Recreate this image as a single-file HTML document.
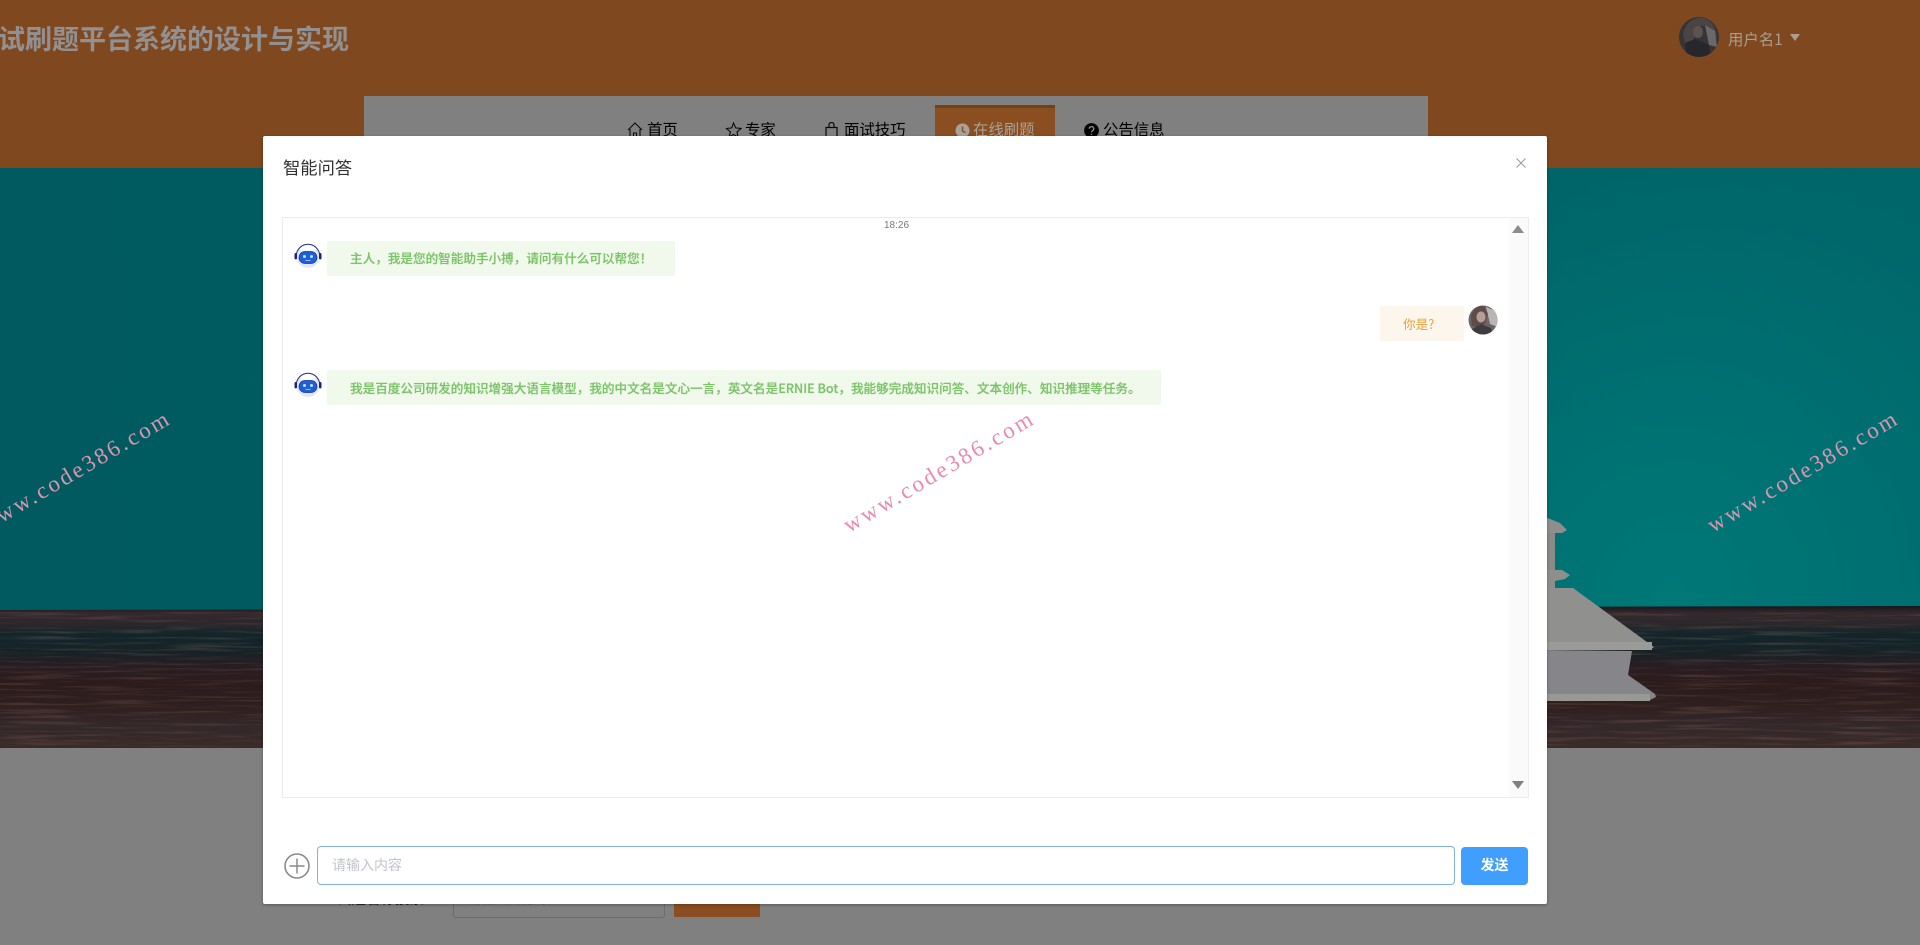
<!DOCTYPE html>
<html lang="zh"><head><meta charset="utf-8"><title>智能问答</title>
<style>
html,body{margin:0;padding:0;width:1920px;height:945px;overflow:hidden;background:#808080}
body{position:relative;font-family:"Liberation Sans","Noto Sans CJK SC",sans-serif}
div,span,svg{position:absolute}
.t{white-space:nowrap}
.cjk{font-family:"Noto Sans CJK SC","Liberation Sans",sans-serif}
.nav{top:120px;height:22px;line-height:22px;font-size:15.4px;color:#000}
.b{height:35px;line-height:35px;border-radius:2px;font-size:12.6px;white-space:nowrap}
.g{background:#f0f9eb;color:#7cc36a;left:327px;padding-left:23px;box-sizing:border-box;font-weight:500;text-shadow:0 0 .5px #7cc36a}
</style></head><body>

<!-- hero -->
<svg style="left:0;top:168px" width="1920" height="580" viewBox="0 168 1920 580">
<defs>
<linearGradient id="teal" x1="0" x2="1" y1="0" y2="0">
<stop offset="0" stop-color="#005a5f"/><stop offset=".78" stop-color="#006266"/><stop offset="1" stop-color="#00666a"/></linearGradient>
<radialGradient id="glow" gradientUnits="userSpaceOnUse" cx="0" cy="0" r="1" gradientTransform="translate(1670 600) scale(440 470)">
<stop offset="0" stop-color="#007878"/><stop offset=".5" stop-color="#007878" stop-opacity=".55"/><stop offset="1" stop-color="#007878" stop-opacity="0"/></radialGradient>
<linearGradient id="wood" x1="0" x2="0" y1="0" y2="1">
<stop offset="0" stop-color="#17171a"/><stop offset=".05" stop-color="#35282c"/><stop offset=".13" stop-color="#2a272b"/><stop offset=".2" stop-color="#12252a"/><stop offset=".33" stop-color="#182226"/><stop offset=".42" stop-color="#291d22"/><stop offset=".55" stop-color="#2c1b1c"/><stop offset=".7" stop-color="#2f1f1e"/><stop offset=".85" stop-color="#34282a"/><stop offset="1" stop-color="#3b2a27"/></linearGradient>
<filter id="grain" x="0" y="0" width="100%" height="100%"><feTurbulence type="fractalNoise" baseFrequency="0.012 0.35" numOctaves="3" seed="7"/><feColorMatrix values="0 0 0 0 .55  0 0 0 0 .36  0 0 0 0 .3  1.9 0 0 0 -.95"/></filter>
</defs>
<rect x="0" y="168" width="1920" height="445" fill="url(#teal)"/>
<rect x="1200" y="168" width="720" height="445" fill="url(#glow)"/>
<polygon points="0,610 1920,606 1920,748 0,748" fill="url(#wood)"/>
<rect x="0" y="612" width="1920" height="136" filter="url(#grain)" opacity=".3"/>
<!-- book stack -->
<g fill="#8e8e8c">
<polygon points="1540,515 1560,523 1567,530 1562,533 1540,533"/>
<rect x="1540" y="533" width="15" height="38" fill="#8a8a88"/>
<polygon points="1540,570 1562,570 1570,575 1565,579 1555,581 1555,588 1540,590"/>
<polygon points="1540,588 1573,588 1647,642 1654,647 1650,650 1540,650" fill="#90908e"/>
<polygon points="1540,650 1632,651 1628,675 1655,694 1656,697 1648,701 1540,701" fill="#85858a"/>
<rect x="1540" y="694" width="110" height="7" fill="#989895"/>
<rect x="1540" y="642" width="112" height="8" fill="#9a9a97"/>
</g>
</svg>

<!-- header -->
<div style="left:0;top:0;width:1920px;height:168px;background:#80481f"></div>
<div class="t" style="right:1571px;top:20px;font-size:27px;line-height:40px;font-weight:700;color:#929090">试刷题平台系统的设计与实现</div>

<svg style="left:1679px;top:17px" width="40" height="40" viewBox="0 0 40 40">
<defs><clipPath id="ca"><circle cx="20" cy="20" r="20"/></clipPath></defs>
<g clip-path="url(#ca)"><rect width="40" height="40" fill="#353437"/>
<path d="M4 18C6 6 14 0 24 1c8 2 13 9 14 20l-9-3-3-10-8 2-3 12-8 8z" fill="#4a4445"/>
<path d="M26 8l10 6 2 16-8-2z" fill="#6a6868"/><path d="M6 26l10-4 14 6 2 12H8z" fill="#26262b"/><ellipse cx="19" cy="15" rx="5" ry="6" fill="#5d5350"/></g></svg>
<div class="t cjk" style="left:1728px;top:28px;font-size:15.4px;line-height:22px;color:#a89e92">用户名1</div>
<svg style="left:1790px;top:34px" width="10" height="8"><polygon points="0,0 10,0 5,7" fill="#a89e92"/></svg>

<!-- nav -->
<div style="left:364px;top:96px;width:1064px;height:72px;background:#808080"></div>
<div style="left:935px;top:105px;width:120px;height:63px;background:#8a4e20;border-top:3px solid #74401a;box-sizing:border-box"></div>

<svg style="left:627px;top:122px" width="16" height="17" viewBox="0 0 16 17" fill="none" stroke="#0a0a0a" stroke-width="1.1"><path d="M1 8l7-7 7 7M3 7v9h10V7M6.500 16v-5h3v5"/></svg>
<div class="t nav" style="left:647px">首页</div>
<svg style="left:725px;top:122px" width="17" height="16" viewBox="0 0 17 16" fill="none" stroke="#0a0a0a" stroke-width="1.1"><path d="M8.500 1l2.200 4.900 5.300.6-4 3.500 1.100 5.200-4.600-2.700-4.600 2.700L5.500 10l-4-3.500 5.300-.6z"/></svg>
<div class="t nav" style="left:745px">专家</div>
<svg style="left:825px;top:122px" width="13" height="16" viewBox="0 0 13 16" fill="none" stroke="#0a0a0a" stroke-width="1.2"><path d="M1 5.500h11v9.500H1zM4 5.500V3a2.500 2.500 0 0 1 5 0v2.500"/></svg>
<div class="t nav" style="left:844px">面试技巧</div>
<svg style="left:955px;top:123px" width="15" height="15" viewBox="0 0 15 15"><circle cx="7.500" cy="7.500" r="7" fill="#a8a29a"/><path d="M7.500 3.500v4.500l3 1.500" stroke="#8a4e20" stroke-width="1.500" fill="none"/></svg>
<div class="t nav" style="left:973px;color:#a8a29a">在线刷题</div>
<svg style="left:1084px;top:123px" width="15" height="15" viewBox="0 0 15 15"><circle cx="7.500" cy="7.500" r="7.400" fill="#000"/><path d="M5.300 5.800a2.200 2.200 0 1 1 3.300 1.900c-.8.500-1.100.8-1.100 1.700M7.500 10.700v1.300" stroke="#8a8a8a" stroke-width="1.400" fill="none"/></svg>
<div class="t nav" style="left:1103px">公告信息</div>

<!-- content below modal -->
<div class="t cjk" style="left:337px;top:888px;font-size:14.500px;line-height:22px;color:#1c1c1c">试题名称搜索</div>
<div style="left:453px;top:880px;width:212px;height:38px;border:1px solid #6c6c6c;border-radius:3px;box-sizing:border-box"></div>
<div class="t cjk" style="left:468px;top:888px;font-size:13px;line-height:22px;color:#6e6e6e">请输入关键词</div>
<div style="left:674px;top:880px;width:86px;height:37px;background:#8a4e22"></div>

<!-- modal -->
<div style="left:263px;top:136px;width:1284px;height:768px;background:#fff;border-radius:2px;box-shadow:0 1px 3px rgba(0,0,0,.3)"></div>
<div class="t cjk" style="left:283px;top:154px;font-size:17.300px;line-height:26px;color:#303133">智能问答</div>
<svg style="left:1515px;top:157px" width="12" height="12" viewBox="0 0 12 12"><path d="M1.500 1.500l9 9M10.500 1.500l-9 9" stroke="#9a9ca1" stroke-width="1.100" fill="none"/></svg>

<!-- chat box -->
<div style="left:282px;top:217px;width:1247px;height:581px;border:1px solid #ececec;box-sizing:border-box"></div>
<div style="left:1509px;top:218px;width:19px;height:579px;background:#fafafa"></div>
<svg style="left:1512px;top:225px" width="12" height="9"><polygon points="6,0 12,8 0,8" fill="#8c8c8c"/></svg>
<svg style="left:1512px;top:781px" width="12" height="9"><polygon points="0,0 12,0 6,8" fill="#808080"/></svg>
<div class="t" style="left:884px;top:220px;font-size:10px;line-height:12px;color:#777">18:26</div>

<svg width="0" height="0" style="left:0;top:0"><defs>
<g id="bot">
<circle cx="14" cy="14" r="12" fill="#e6e6f8"/>
<path d="M2.300 14a11.700 11.700 0 0 1 23.400 0" fill="none" stroke="#20308e" stroke-width="1"/>
<path d="M6 6.500a11 11 0 0 1 16 0l-2 3H8z" fill="#fff"/>
<rect x="0.500" y="11" width="2.500" height="6.500" rx="1.200" fill="#17267c"/><rect x="25" y="11" width="2.500" height="6.500" rx="1.200" fill="#17267c"/>
<rect x="5" y="9.500" width="18" height="12" rx="6" fill="#1c5fd6" stroke="#15389c" stroke-width=".7"/>
<circle cx="10.500" cy="14.500" r="1.500" fill="#bfe3ff"/><circle cx="17.500" cy="14.500" r="1.500" fill="#bfe3ff"/>
<path d="M11.500 18q2.500 1.300 5 0" stroke="#bfe3ff" fill="none" stroke-width=".8"/>
</g></defs></svg>

<svg style="left:294px;top:242px" width="28" height="28" viewBox="0 0 28 28"><use href="#bot"/></svg>
<div class="b g cjk" style="top:241px;width:348px;line-height:34px">主人，我是您的智能助手小搏，请问有什么可以帮您！</div>

<div class="b cjk" style="left:1380px;top:306px;width:84px;height:35px;line-height:35px;background:#fdf6ec;color:#e6a23c;padding-left:23px;box-sizing:border-box">你是?</div>
<svg style="left:1468px;top:305px" width="30" height="30" viewBox="0 0 30 30">
<defs><clipPath id="cb"><circle cx="15" cy="15" r="14.500"/></clipPath></defs>
<g clip-path="url(#cb)"><rect width="30" height="30" fill="#6f6465"/>
<path d="M18 2l12 5v15l-8-3z" fill="#b8b6b4"/><path d="M3 12C4 4 10 0 16 1l4 8-3 9-4 4-9-1z" fill="#5e4c4d"/><ellipse cx="13" cy="12" rx="4.500" ry="5.500" fill="#b89d96"/><path d="M4 24l9-5 10 4 2 7H5z" fill="#3f3c40"/></g></svg>

<svg style="left:294px;top:371px" width="28" height="28" viewBox="0 0 28 28"><use href="#bot"/></svg>
<div class="b g cjk" style="top:370px;width:834px">我是百度公司研发的知识增强大语言模型，我的中文名是文心一言，英文名是ERNIE Bot，我能够完成知识问答、文本创作、知识推理等任务。</div>

<!-- input row -->
<svg style="left:284px;top:853px" width="26" height="26" viewBox="0 0 26 26" fill="none" stroke="#8a8a8a"><circle cx="13" cy="13" r="12" stroke-width="1.600"/><path d="M5.500 13h15M13 5.500v15" stroke-width="1.500"/></svg>
<div style="left:317px;top:846px;width:1138px;height:39px;border:1px solid #7fb4d6;border-radius:4px;box-sizing:border-box;background:#fff"></div>
<div class="t cjk" style="left:332px;top:855px;font-size:14px;line-height:21px;color:#c0c4cc">请输入内容</div>
<div class="t cjk" style="left:1461px;top:847px;width:67px;height:38px;line-height:37px;background:#409eff;border-radius:4px;color:#fff;font-size:14px;font-weight:700;text-align:center">发送</div>

<!-- watermarks -->
<svg style="left:0;top:0" width="1920" height="945" font-family="Liberation Serif,serif" font-size="23" letter-spacing="2.700" fill="#e98bab">
<text transform="translate(-15,533) rotate(-30.500)" fill="#d996b0">www.code386.com</text>
<text transform="translate(849,533) rotate(-30.500)">www.code386.com</text>
<text transform="translate(1713,533) rotate(-30.500)" fill="#d996b0">www.code386.com</text>
</svg>
</body></html>
